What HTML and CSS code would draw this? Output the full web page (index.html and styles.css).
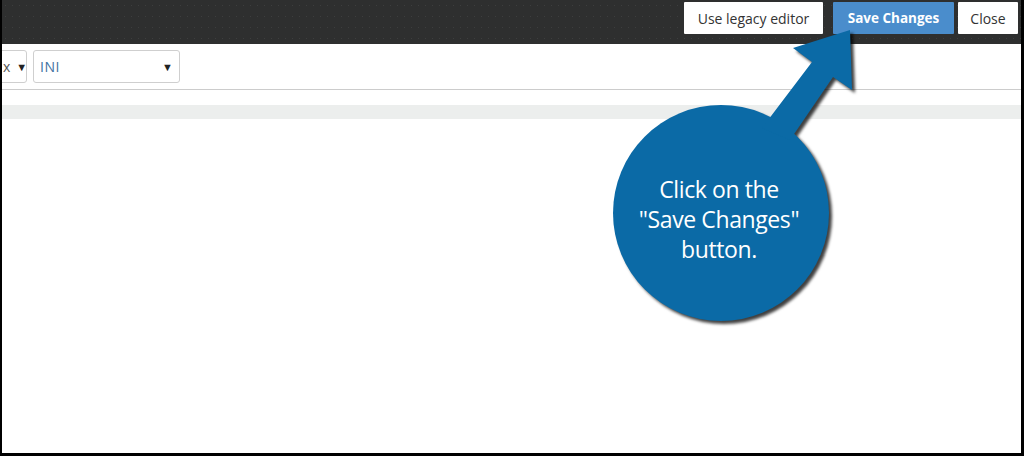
FILE: index.html
```html
<!DOCTYPE html>
<html>
<head>
<meta charset="utf-8">
<link rel="stylesheet" href="styles.css">
</head>
<body>
<div class="frame">
  <header class="topbar">
    <button class="btn btn-light btn-legacy">Use legacy editor</button>
    <button class="btn btn-primary">Save Changes</button>
    <button class="btn btn-light btn-close">Close</button>
  </header>
  <div class="toolbar">
    <div class="select select-cut"><span class="val">x</span><span class="caret">&#9660;</span></div>
    <div class="select select-mode"><span class="val">INI</span><span class="caret">&#9660;</span></div>
  </div>
  <div class="spacer"></div>
  <div class="band"></div>
  <div class="editor"></div>

  <svg class="callout" width="1024" height="456" viewBox="0 0 1024 456">
    <g class="shape">
      <circle cx="721" cy="213" r="108"/>
      <polygon points="762,128 812,62 793,48 850,30 852,90 833,77 790,140"/>
    </g>
  </svg>
  <div class="callout-text">Click on the<br>"Save Changes"<br>button.</div>
</div>
</body>
</html>
```
FILE: styles.css
```css
html, body {
  margin: 0;
  padding: 0;
  background: #000;
}
.frame {
  position: relative;
  width: 1019px;
  height: 453px;
  border-left: 2px solid #000;
  border-right: 3px solid #000;
  border-bottom: 3px solid #000;
  background: #fff;
  overflow: hidden;
  font-family: "Open Sans", "Liberation Sans", sans-serif;
}
.topbar {
  height: 44px;
  box-sizing: border-box;
  background-color: #2e2f2f;
  background-image: radial-gradient(circle, rgba(255,255,255,0.07) 0.6px, transparent 0.9px);
  background-size: 7px 11px;
  display: flex;
  justify-content: flex-end;
  align-items: flex-start;
  padding: 2px 3px 0 0;
}
.btn {
  height: 32px;
  border: none;
  margin: 0;
  padding: 0;
  font-family: "Open Sans", "Liberation Sans", sans-serif;
  font-size: 14px;
  cursor: pointer;
  border-radius: 1px;
}
.btn-light {
  background: #fff;
  color: #333;
}
.btn-legacy {
  width: 139px;
  margin-right: 10px;
}
.btn-primary {
  width: 121px;
  background: #4a8dcc;
  color: #fff;
  font-weight: 700;
  font-size: 13.5px;
  margin-right: 4px;
}
.btn-close {
  width: 60px;
}
.toolbar {
  height: 46px;
  box-sizing: border-box;
  border-bottom: 1px solid #cccccc;
  display: flex;
  align-items: flex-start;
  padding-top: 6px;
  gap: 6px;
}
.select {
  height: 33px;
  box-sizing: border-box;
  border: 1px solid #cfcfcf;
  border-radius: 3px;
  display: flex;
  align-items: center;
  justify-content: space-between;
  font-size: 14px;
  color: #555;
  background: #fff;
}
.select-cut {
  width: 40px;
  margin-left: -15px;
  padding: 0 5px 0 15px;
  justify-content: flex-start;
  gap: 6px;
}
.select-mode {
  width: 147px;
  padding: 0 6px 0 6px;
}
.select-mode .val {
  color: #3d6f9f;
  letter-spacing: 0.5px;
}
.caret {
  font-size: 11px;
  color: #222;
}
.spacer {
  height: 15px;
}
.band {
  height: 14px;
  background: #eceeed;
}
.callout {
  position: absolute;
  left: -2px;
  top: 0;
  pointer-events: none;
}
.callout .shape {
  fill: #0b6aa6;
  filter: drop-shadow(3px 3px 1.5px rgba(0,0,0,0.75));
}
.callout-text {
  position: absolute;
  left: 597px;
  top: 174px;
  width: 240px;
  text-align: center;
  color: #fff;
  font-family: "Open Sans", "Liberation Sans", sans-serif;
  font-size: 23px;
  line-height: 30px;
  letter-spacing: -0.4px;
}
```
